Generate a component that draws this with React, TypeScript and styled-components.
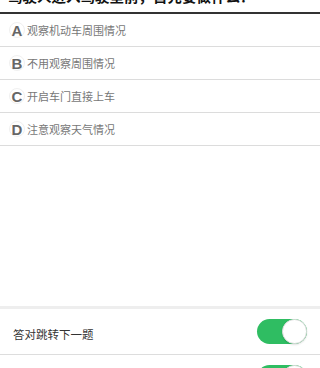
import React from "react";
import styled, { createGlobalStyle } from "styled-components";

const GlobalStyle = createGlobalStyle`
	html, body {
		margin: 0;
		padding: 0;
		background: #ffffff;
		font-family: "Noto Sans CJK SC", "Noto Sans", sans-serif;
		overflow: hidden;
	}
`;

const StyledPage = styled.div`
	width: 320px;
	min-height: 368px;
	background: #ffffff;
`;

const StyledHeader = styled.div`
	height: 12px;
	overflow: hidden;
	display: flex;
	align-items: flex-end;
	padding: 0 8px;
	border-bottom: 2px solid #333333;
`;

const StyledTitle = styled.h1`
	margin: 0 0 6px;
	font-size: 14.5px;
	line-height: 20px;
	font-weight: 700;
	color: #111111;
	white-space: nowrap;
`;

const StyledOptionRow = styled.div`
	display: flex;
	align-items: center;
	height: 32px;
	padding: 0 9px;
	gap: 2px;
	border-bottom: 1px solid #dcdcdc;
`;

const StyledBadge = styled.span`
	display: flex;
	align-items: center;
	justify-content: center;
	box-sizing: border-box;
	width: 16px;
	height: 16px;
	border-radius: 50%;
	border: 1px solid #f0f0f0;
	font-family: "Liberation Sans", Arial, sans-serif;
	font-size: 15px;
	font-weight: 700;
	color: #666666;
`;

const StyledOptionText = styled.span`
	font-size: 11px;
	color: #777777;
`;

const StyledSettings = styled.div`
	margin-top: 160px;
	border-top: 3px solid #eeeeee;
`;

const StyledSettingRow = styled.div`
	display: flex;
	align-items: center;
	justify-content: space-between;
	height: 45px;
	padding: 0 13px;
	border-bottom: 1px solid #dddddd;
`;

const StyledSettingLabel = styled.span`
	font-size: 11.5px;
	color: #333333;
	padding-top: 4px;
`;

const StyledToggle = styled.span<{ $on: boolean }>`
	position: relative;
	display: block;
	width: 50px;
	height: 25px;
	border-radius: 13px;
	background: ${(p) => (p.$on ? "#2fbd62" : "#e5e5e5")};
`;

const StyledKnob = styled.span<{ $on: boolean }>`
	position: absolute;
	top: 0;
	left: ${(p) => (p.$on ? "25px" : "0")};
	width: 25px;
	height: 25px;
	box-sizing: border-box;
	border-radius: 50%;
	background: #ffffff;
	border: 1px solid #dedede;
	box-shadow: 0 1px 2px rgba(0, 0, 0, 0.12);
`;

const options = [
	{ key: "A", text: "观察机动车周围情况" },
	{ key: "B", text: "不用观察周围情况" },
	{ key: "C", text: "开启车门直接上车" },
	{ key: "D", text: "注意观察天气情况" },
];

const settings = [
	{ label: "答对跳转下一题", on: true },
	{ label: "自动移除错题", on: true },
];

const App: React.FC = () => {
	return (
		<StyledPage>
			<GlobalStyle />
			<StyledHeader>
				<StyledTitle>驾驶人进入驾驶室前，首先要做什么？</StyledTitle>
			</StyledHeader>

			{options.map((o) => (
				<StyledOptionRow key={o.key}>
					<StyledBadge>{o.key}</StyledBadge>
					<StyledOptionText>{o.text}</StyledOptionText>
				</StyledOptionRow>
			))}

			<StyledSettings>
				{settings.map((s) => (
					<StyledSettingRow key={s.label}>
						<StyledSettingLabel>{s.label}</StyledSettingLabel>
						<StyledToggle $on={s.on}>
							<StyledKnob $on={s.on} />
						</StyledToggle>
					</StyledSettingRow>
				))}
			</StyledSettings>
		</StyledPage>
	);
};

export default App;
